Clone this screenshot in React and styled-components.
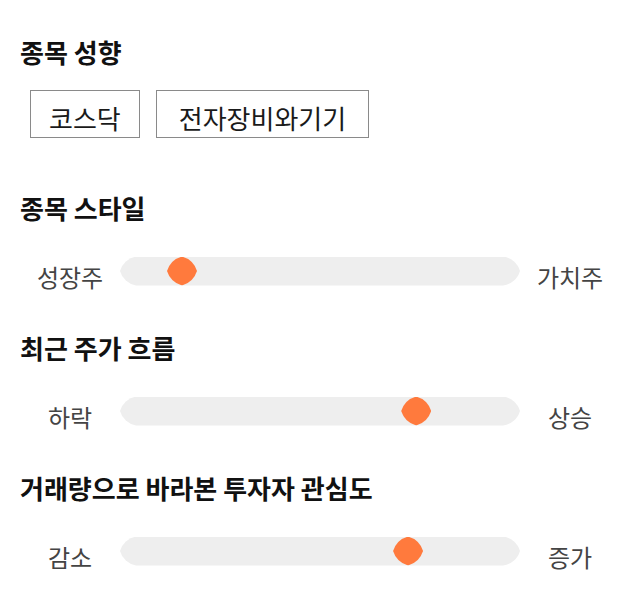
import React from "react";
import styled, { createGlobalStyle } from "styled-components";

const GlobalStyle = createGlobalStyle`
  body {
    margin: 0;
    background: #ffffff;
    font-family: "Noto Sans CJK KR", "Noto Sans", sans-serif;
  }
`;

const Page = styled.div`
  display: flex;
  flex-direction: column;
  gap: 38px;
  padding: 34px 20px;
`;

const Section = styled.section`
  display: flex;
  flex-direction: column;
`;

const Title = styled.h2`
  margin: 0;
  font-size: 26px;
  line-height: 36px;
  font-weight: 700;
  color: #111111;
`;

const TagRow = styled.div`
  display: flex;
  gap: 16px;
  margin: 20px 0 14px 10px;
`;

const Tag = styled.div`
  box-sizing: border-box;
  height: 48px;
  padding: 9px ${(p) => p.$pad}px 1px;
  border: 1px solid #8a8a8a;
  font-size: 26px;
  line-height: 36px;
  color: #1a1a1a;
  white-space: nowrap;
`;

const SliderRow = styled.div`
  display: flex;
  align-items: center;
  margin-top: 24px;
`;

const Label = styled.span`
  width: 100px;
  flex: none;
  padding-top: 12px;
  text-align: center;
  font-size: 24px;
  line-height: 30px;
  color: #444444;
`;

const Track = styled.div`
  position: relative;
  flex: 1;
  height: 29px;
  background: #eeeeee;
  clip-path: path("M16 0 H383 A20 20 0 0 1 400 14.5 A20 20 0 0 1 383 29 H16 A20 20 0 0 1 0 14.5 A20 20 0 0 1 16 0 Z");
`;

const Thumb = styled.div`
  position: absolute;
  top: 0;
  width: 30px;
  height: 29px;
  background: #ff7a3d;
  clip-path: path("M15 0 A22 22 0 0 1 30 14.5 A22 22 0 0 1 15 29 A22 22 0 0 1 0 14.5 A22 22 0 0 1 15 0 Z");
`;

const sliders = [
  { title: "종목 스타일", left: "성장주", right: "가치주", value: 0.127 },
  { title: "최근 주가 흐름", left: "하락", right: "상승", value: 0.76 },
  { title: "거래량으로 바라본 투자자 관심도", left: "감소", right: "증가", value: 0.738 },
];

function Slider({ left, right, value }) {
  return (
    <SliderRow>
      <Label>{left}</Label>
      <Track>
        <Thumb style={{ left: `calc(${value} * (100% - 30px))` }} />
      </Track>
      <Label>{right}</Label>
    </SliderRow>
  );
}

export default function App() {
  return (
    <>
      <GlobalStyle />
      <Page>
        <Section>
          <Title>종목 성향</Title>
          <TagRow>
            <Tag $pad={18}>코스닥</Tag>
            <Tag $pad={22}>전자장비와기기</Tag>
          </TagRow>
        </Section>
        {sliders.map((s) => (
          <Section key={s.title}>
            <Title>{s.title}</Title>
            <Slider left={s.left} right={s.right} value={s.value} />
          </Section>
        ))}
      </Page>
    </>
  );
}
